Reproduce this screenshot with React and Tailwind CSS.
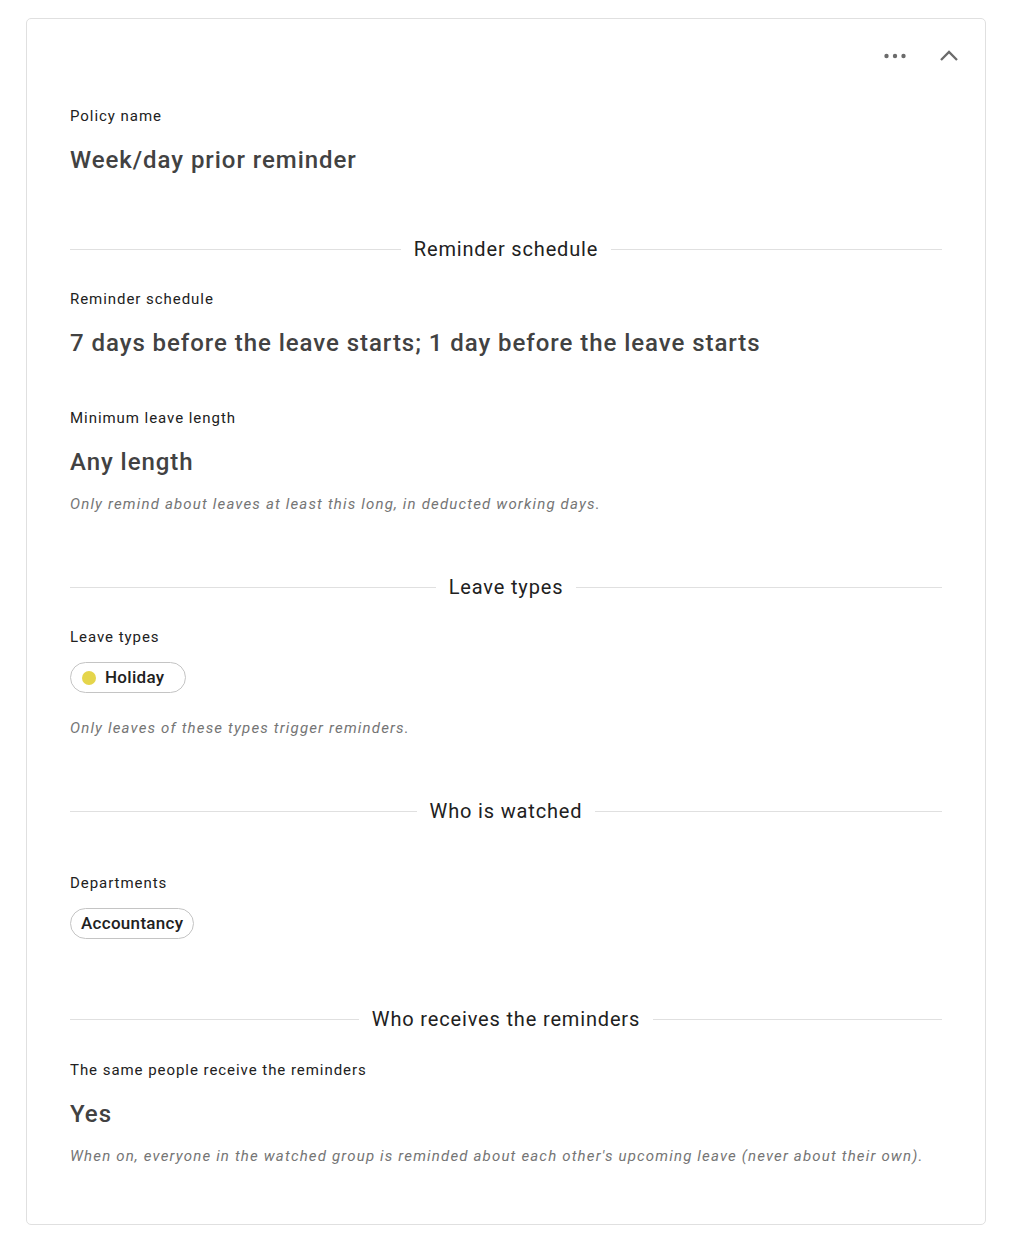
import React from 'react';

const Divider = ({ title, className = '' }) => (
  <div className={`flex items-center gap-[13px] ${className}`}>
    <div className="flex-1 h-px bg-[#e0e0e0]" />
    <div className="text-[20px] leading-[28px] tracking-[0.84px] text-[#212121]">{title}</div>
    <div className="flex-1 h-px bg-[#e0e0e0]" />
  </div>
);

const Label = ({ children, className = '' }) => (
  <div className={`text-[15px] leading-[20px] tracking-[0.95px] text-[#212121] ${className}`}>{children}</div>
);

const Value = ({ children, className = '' }) => (
  <div className={`text-[24px] leading-[32px] font-medium tracking-[0.95px] text-[#424242] ${className}`}>{children}</div>
);

const Hint = ({ children, className = '' }) => (
  <div className={`text-[15px] leading-[20px] italic tracking-[1.17px] text-[#757575] ${className}`}>{children}</div>
);

const Chip = ({ children, dot }) => (
  <div className={`inline-flex items-center h-[31px] rounded-full border border-[#c4c4c4] ${dot ? 'pl-[11px] pr-[21px] gap-[9px]' : 'px-[10px]'}`}>
    {dot && <span className="w-[14px] h-[14px] rounded-full" style={{ background: dot }} />}
    <span className="text-[17px] font-medium tracking-[0.3px] text-[#212121]">{children}</span>
  </div>
);

export default function App() {
  return (
    <div className="min-h-screen bg-white pt-[18px] px-[26px] font-['Roboto',sans-serif]">
      <div className="w-[960px] border border-[#e0e0e0] rounded-[5px] px-[43px] pt-[17px] pb-[58px]">
        <div className="flex justify-end items-center h-10 gap-[30px] -mr-[19px]">
          <button className="w-6 h-6 flex items-center justify-center">
            <svg width="24" height="24" viewBox="0 0 24 24">
              <circle cx="3.5" cy="12" r="2.2" fill="#6b6b6b" />
              <circle cx="12" cy="12" r="2.2" fill="#6b6b6b" />
              <circle cx="20.5" cy="12" r="2.2" fill="#6b6b6b" />
            </svg>
          </button>
          <button className="w-6 h-6 flex items-center justify-center">
            <svg width="24" height="24" viewBox="0 0 24 24">
              <polyline points="4,16 12,8 20,16" fill="none" stroke="#6b6b6b" strokeWidth="2.3" />
            </svg>
          </button>
        </div>

        <Label className="mt-[30px]">Policy name</Label>
        <Value className="mt-[18px]">Week/day prior reminder</Value>

        <Divider title="Reminder schedule" className="mt-[59px]" />
        <Label className="mt-[26px]">Reminder schedule</Label>
        <Value className="mt-[18px]">7 days before the leave starts; 1 day before the leave starts</Value>
        <Label className="mt-[49px]">Minimum leave length</Label>
        <Value className="mt-[18px]">Any length</Value>
        <Hint className="mt-[16px]">Only remind about leaves at least this long, in deducted working days.</Hint>

        <Divider title="Leave types" className="mt-[59px]" />
        <Label className="mt-[26px]">Leave types</Label>
        <div className="mt-[15px]">
          <Chip dot="#e5d54b">Holiday</Chip>
        </div>
        <Hint className="mt-[25px]">Only leaves of these types trigger reminders.</Hint>

        <Divider title="Who is watched" className="mt-[59px]" />
        <Label className="mt-[48px]">Departments</Label>
        <div className="mt-[15px]">
          <Chip>Accountancy</Chip>
        </div>

        <Divider title="Who receives the reminders" className="mt-[66px]" />
        <Label className="mt-[27px]">The same people receive the reminders</Label>
        <Value className="mt-[18px]">Yes</Value>
        <Hint className="mt-[16px]">When on, everyone in the watched group is reminded about each other's upcoming leave (never about their own).</Hint>
      </div>
    </div>
  );
}
